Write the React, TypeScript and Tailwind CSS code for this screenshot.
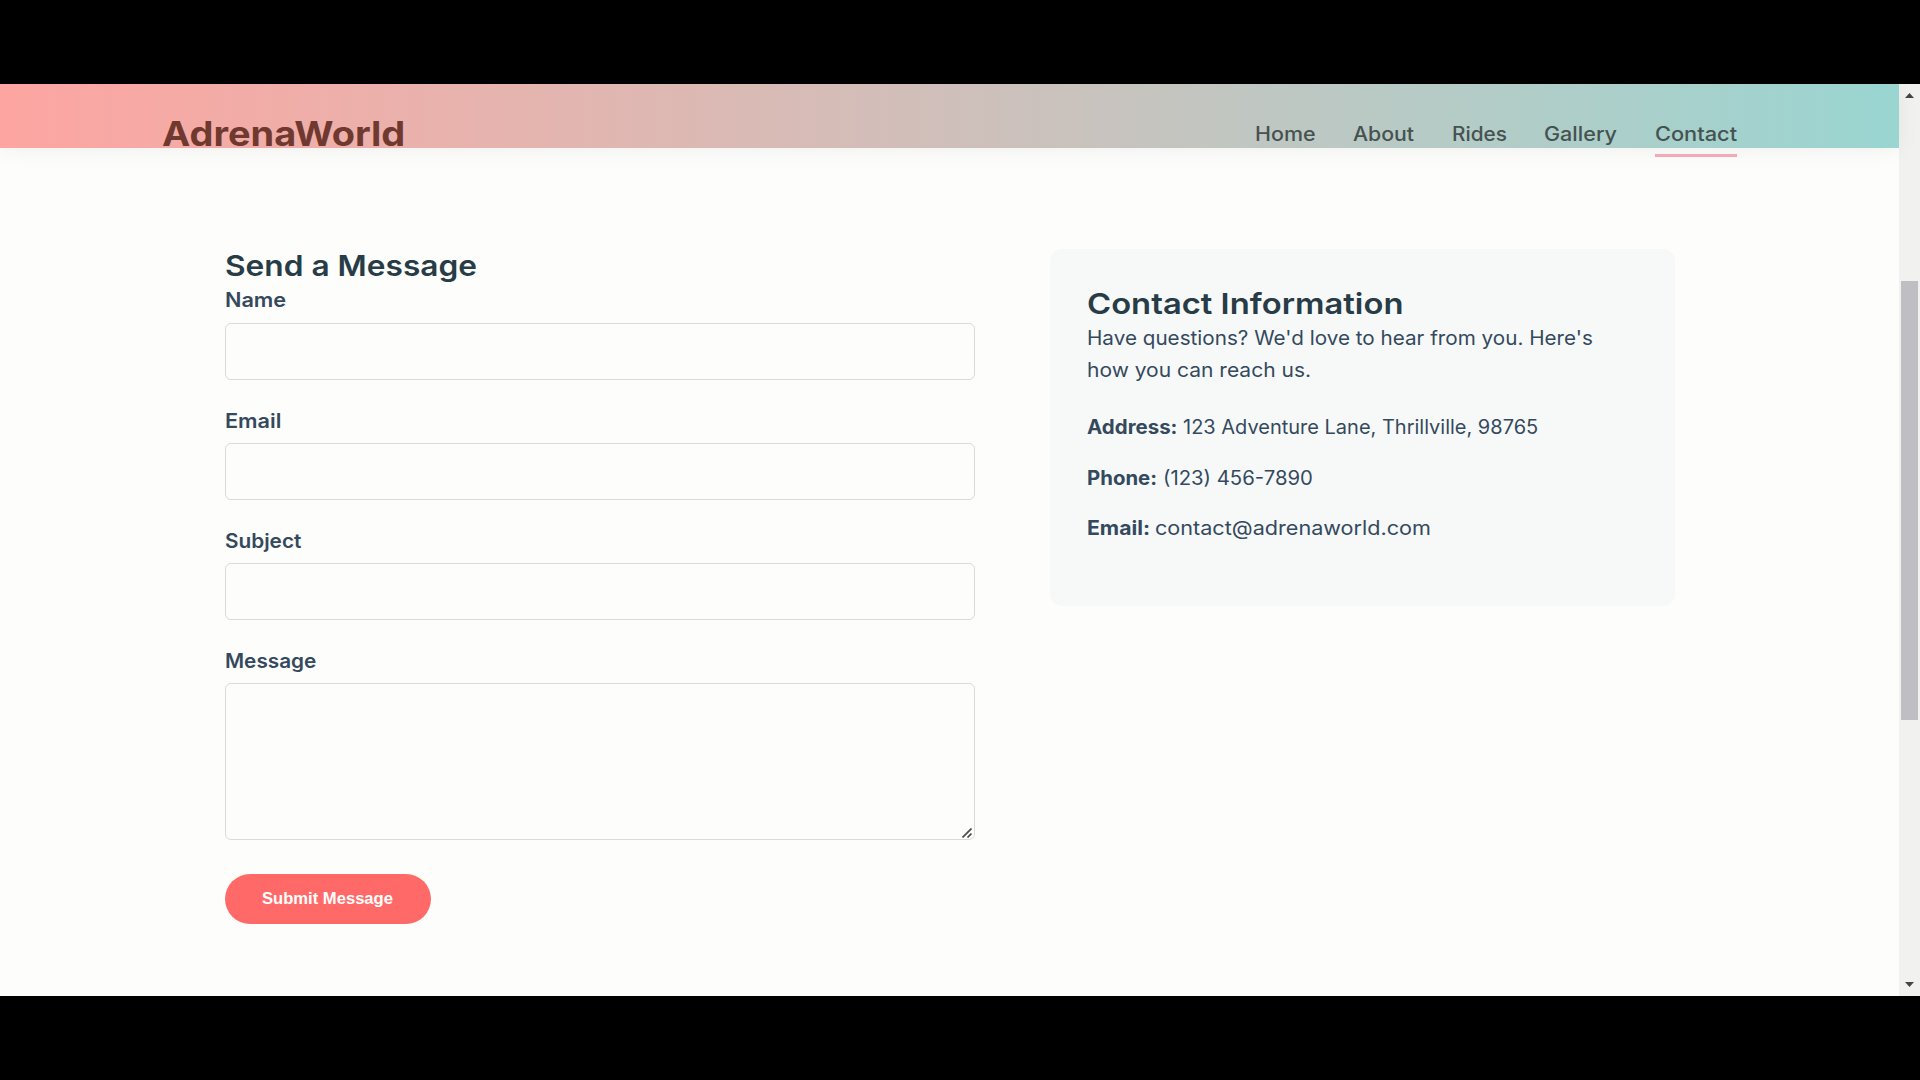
const navLinks = [
  { label: "Home", box: "w-[61px]", stretch: "scale-x-[1.1]" },
  { label: "About", box: "w-[61px]", stretch: "scale-x-[1.09]" },
  { label: "Rides", box: "w-[55px]", stretch: "scale-x-[1.066]" },
  { label: "Gallery", box: "w-[73px]", stretch: "scale-x-[1.106]" },
  { label: "Contact", box: "w-[82px]", stretch: "scale-x-[1.116]", active: true },
];

const fields = [
  { label: "Name", offset: "", stretch: "scale-x-[1.11]" },
  { label: "Email", offset: "pt-px", stretch: "scale-x-[1.11]" },
  { label: "Subject", offset: "pt-px", stretch: "scale-x-[1.065]" },
];

const details = [
  {
    term: "Address:",
    termBox: "w-[96px]",
    termStretch: "scale-x-[1.05]",
    value: "123 Adventure Lane, Thrillville, 98765",
    valueStretch: "scale-x-[1.025]",
  },
  {
    term: "Phone:",
    termBox: "w-[76px]",
    termStretch: "scale-x-[1.045]",
    value: "(123) 456-7890",
    valueStretch: "scale-x-[1.042]",
  },
  {
    term: "Email:",
    termBox: "w-[68px]",
    termStretch: "scale-x-[1.086]",
    value: "contact@adrenaworld.com",
    valueStretch: "scale-x-[1.108]",
  },
];

const labelClass =
  "block h-8 w-max origin-left text-[19.5px] leading-8 font-[560] text-[#34495e]";
const headingClass =
  "w-max origin-left text-[29px] leading-[37px] font-[640] text-[#273c47]";

function Header() {
  return (
    <header className="relative h-16 bg-linear-to-r from-[#fda5a1] via-[#cfbfba] to-[#99d5d1] shadow-[0_2px_20px_rgba(0,0,0,0.06)]">
      <div className="flex items-start pl-[161.5px]">
        <a className="mt-[28px] w-[1093px] text-[34.5px] leading-[44px] font-bold whitespace-nowrap text-[#70392f]">
          <span className="inline-block origin-left scale-x-[1.1]">AdrenaWorld</span>
        </a>
        <nav className="mt-[34px] flex gap-[37.5px] text-[19.5px] leading-8 font-medium text-[#465250]">
          {navLinks.map((link) => (
            <a
              key={link.label}
              className={`${link.box} h-[39px] ${link.active ? "border-b-[3px] border-[#f4a9b8]" : ""}`}
            >
              <span className={`inline-block origin-left ${link.stretch}`}>{link.label}</span>
            </a>
          ))}
        </nav>
      </div>
    </header>
  );
}

function MessageForm() {
  return (
    <form className="w-[750px]">
      <h2 className={`${headingClass} scale-x-[1.092]`}>Send a Message</h2>
      {fields.map((field) => (
        <div key={field.label} className="mb-6">
          <label className={`${labelClass} ${field.offset} ${field.stretch}`}>{field.label}</label>
          <input className="mt-[7px] block h-[57px] w-full rounded-[6px] border border-[#dadadc] bg-transparent px-4 outline-none" />
        </div>
      ))}
      <label className={`${labelClass} scale-x-[1.063] pt-px`}>Message</label>
      <div className="relative mt-[7px]">
        <textarea className="block h-[157px] w-full resize-none rounded-[6px] border border-[#dadadc] bg-transparent px-4 outline-none" />
        <svg
          className="absolute right-[3px] bottom-[2px] h-[10px] w-[10px]"
          viewBox="0 0 10 10"
          fill="none"
          stroke="#4a4a4a"
          strokeWidth="1.7"
        >
          <path d="M0.5 9.5L9.5 0.5M5.5 9.5L9.5 5.5" />
        </svg>
      </div>
      <button
        type="button"
        className="mt-[34px] flex h-[50px] w-[206px] items-center justify-center rounded-full bg-[#ff6a68] pt-px font-['Liberation_Sans',sans-serif] text-[16.6px] font-bold text-white"
      >
        Submit Message
      </button>
    </form>
  );
}

function ContactCard() {
  return (
    <aside className="h-[357px] w-[625px] rounded-[12px] bg-[#f7f9f8] px-[37px] pt-9 text-[19.5px] leading-8 whitespace-nowrap text-[#34495e]">
      <h2 className={`${headingClass} scale-x-[1.13]`}>Contact Information</h2>
      <p>
        <span className="block w-max origin-left scale-x-[1.06]">
          Have questions? We'd love to hear from you. Here's
        </span>
        <span className="block w-max origin-left scale-x-[1.077]">how you can reach us.</span>
      </p>
      <dl className="mt-[25px] flex flex-col gap-[18.5px]">
        {details.map((item) => (
          <div key={item.term} className="flex">
            <dt className={`${item.termBox} font-bold`}>
              <span className={`inline-block origin-left ${item.termStretch}`}>{item.term}</span>
            </dt>
            <dd className={`origin-left ${item.valueStretch}`}>{item.value}</dd>
          </div>
        ))}
      </dl>
    </aside>
  );
}

function Scrollbar() {
  return (
    <div className="flex w-[21px] flex-col items-center bg-[#f1f1ef]">
      <svg className="mt-[9px] h-[5px] w-[9px]" viewBox="0 0 9 5" fill="#454545">
        <path d="M4.5 0L9 5H0z" />
      </svg>
      <div className="mt-[183px] h-[439px] w-[17px] bg-[#bfbec2]" />
      <svg className="mt-auto mb-[9px] h-[5px] w-[9px]" viewBox="0 0 9 5" fill="#454545">
        <path d="M0 0h9L4.5 5z" />
      </svg>
    </div>
  );
}

export default function App() {
  return (
    <div className="h-[1080px] w-[1920px] overflow-hidden bg-black py-[84px] font-['Inter',sans-serif]">
      <div className="flex h-[912px] bg-[#fdfdfb]">
        <div className="w-[1899px]">
          <Header />
          <main className="flex items-start pl-[224.5px]">
            <div className="mt-[99px]">
              <MessageForm />
            </div>
            <div className="mt-[101px] ml-[75px]">
              <ContactCard />
            </div>
          </main>
        </div>
        <Scrollbar />
      </div>
    </div>
  );
}
